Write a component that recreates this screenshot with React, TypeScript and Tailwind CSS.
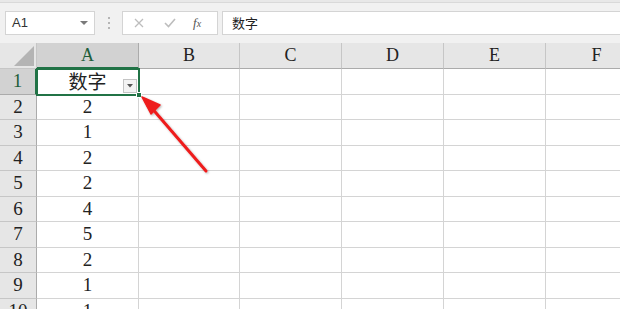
import React from "react";

const cols = ["A", "B", "C", "D", "E", "F"];
const colW = [102, 101, 102, 102, 102, 102];
const rowH = [26, 25, 26, 25, 26, 25, 26, 25, 26, 25];
const vals = ["数字", "2", "1", "2", "2", "4", "5", "2", "1", "1"];

const serif = { fontFamily: '"Liberation Serif", "Noto Sans CJK SC", serif' };

export default function App() {
  return (
    <div className="relative w-[620px] h-[309px] overflow-hidden bg-white" style={{ fontFamily: '"Liberation Sans", "Noto Sans CJK SC", sans-serif' }}>
      {/* top bar */}
      <div className="h-[43px] bg-[#f1f1f1] flex flex-col">
        <div className="h-[3px] bg-[#e8e8e8] border-b border-[#d9d9d9]" />
        <div className="flex items-start pt-[8px] pl-[5px]">
          <div className="w-[90px] h-[24px] bg-white border border-[#d4d4d4] flex items-center justify-between pl-[6px] pr-[6px]">
            <span className="text-[13px] text-[#333]">A1</span>
            <svg width="8" height="5" viewBox="0 0 8 5"><path d="M0 0 L8 0 L4 4 Z" fill="#7a7a7a" /></svg>
          </div>
          <div className="w-[27px] h-[24px] flex flex-col items-center justify-center gap-[3px]">
            <div className="w-[2px] h-[2px] bg-[#b5b5b5]" />
            <div className="w-[2px] h-[2px] bg-[#b5b5b5]" />
            <div className="w-[2px] h-[2px] bg-[#b5b5b5]" />
          </div>
          <div className="w-[96px] h-[24px] bg-white border border-[#d4d4d4] flex items-center">
            <svg className="ml-[11px]" width="10" height="10" viewBox="0 0 10 10"><path d="M1 1 L9 9 M9 1 L1 9" stroke="#bdbdbd" strokeWidth="1.3" /></svg>
            <svg className="ml-[20px]" width="12" height="10" viewBox="0 0 12 10"><path d="M1 5 L4.5 8.5 L11 1" stroke="#bdbdbd" strokeWidth="1.6" fill="none" /></svg>
            <span className="ml-[17px] text-[13px] italic text-[#555]" style={serif}>f<span className="text-[10px]">x</span></span>
          </div>
          <div className="ml-[4px] flex-1 h-[24px] bg-white border border-[#d4d4d4] border-r-0 flex items-center pl-[9px]">
            <span className="text-[13px] text-[#222]" style={{ fontFamily: '"Noto Sans CJK SC", sans-serif' }}>数字</span>
          </div>
        </div>
      </div>

      {/* grid */}
      <div className="flex flex-col w-[620px] overflow-hidden">
        {/* header row */}
        <div className="flex h-[26px]">
          <div className="w-[37px] shrink-0 h-full bg-[#e6e6e6] border-r border-b border-[#c6c6c6] flex items-end justify-end pr-[2px] pb-[2px]">
            <svg width="20" height="20" viewBox="0 0 20 20"><path d="M20 0 L20 20 L0 20 Z" fill="#b4b4b4" /></svg>
          </div>
          {cols.map((c, i) => (
            <div
              key={c}
              className={
                i === 0
                  ? "shrink-0 h-full bg-[#d2d2d2] border-r border-[#ababab] border-b-2 border-b-[#217346] flex items-center justify-center text-[18px] text-[#1e5e3a]"
                  : "shrink-0 h-full bg-[#e6e6e6] border-r border-[#c6c6c6] border-b border-b-[#ababab] flex items-center justify-center text-[18px] text-[#222]"
              }
              style={{ ...serif, width: colW[i] }}
            >
              {c}
            </div>
          ))}
        </div>
        {rowH.map((h, r) => (
          <div key={r} className="flex" style={{ height: h }}>
            <div
              className={
                r === 0
                  ? "w-[37px] shrink-0 h-full bg-[#d2d2d2] border-r-2 border-r-[#217346] border-b border-[#ababab] flex items-center justify-center text-[19px] text-[#1e5e3a]"
                  : "w-[37px] shrink-0 h-full bg-[#e6e6e6] border-r border-r-[#ababab] border-b border-[#c6c6c6] flex items-center justify-center text-[19px] text-[#222]"
              }
              style={serif}
            >
              {r + 1}
            </div>
            {cols.map((c, i) => (
              <div
                key={c}
                className="shrink-0 h-full border-r border-b border-[#d4d4d4] flex items-center justify-center text-[19px] text-[#222]"
                style={{ width: colW[i], ...(i === 0 && r === 0 ? { fontFamily: '"Noto Sans CJK SC", serif' } : serif) }}
              >
                {i === 0 ? vals[r] : ""}
              </div>
            ))}
          </div>
        ))}
      </div>

      {/* selection overlay for A1 */}
      <div className="absolute left-[36px] top-[68px] w-[104px] h-[28px] border-2 border-[#217346] pointer-events-none" />
      <div className="absolute left-[136px] top-[92px] w-[6px] h-[6px] bg-[#217346] border border-white" />
      {/* filter dropdown button */}
      <div className="absolute left-[123px] top-[79px] w-[14px] h-[14px] bg-[#f3f3f3] border border-[#c4c4c4] flex items-center justify-center">
        <svg width="6" height="4" viewBox="0 0 6 4"><path d="M0 0 L6 0 L3 3.5 Z" fill="#555" /></svg>
      </div>

      {/* red arrow */}
      <svg className="absolute left-0 top-0 pointer-events-none" width="620" height="309" viewBox="0 0 620 309">
        <defs>
          <filter id="sh" x="-20%" y="-20%" width="140%" height="140%">
            <feDropShadow dx="1" dy="1" stdDeviation="1" floodColor="#000" floodOpacity="0.3" />
          </filter>
        </defs>
        <g filter="url(#sh)">
          <path d="M206 171 L150 106" stroke="#ee1c1c" strokeWidth="3" strokeLinecap="round" />
          <path d="M142 97 L160 105 L151 114 Z" fill="#ee1c1c" stroke="#ee1c1c" strokeWidth="1.5" strokeLinejoin="round" />
        </g>
      </svg>
    </div>
  );
}
